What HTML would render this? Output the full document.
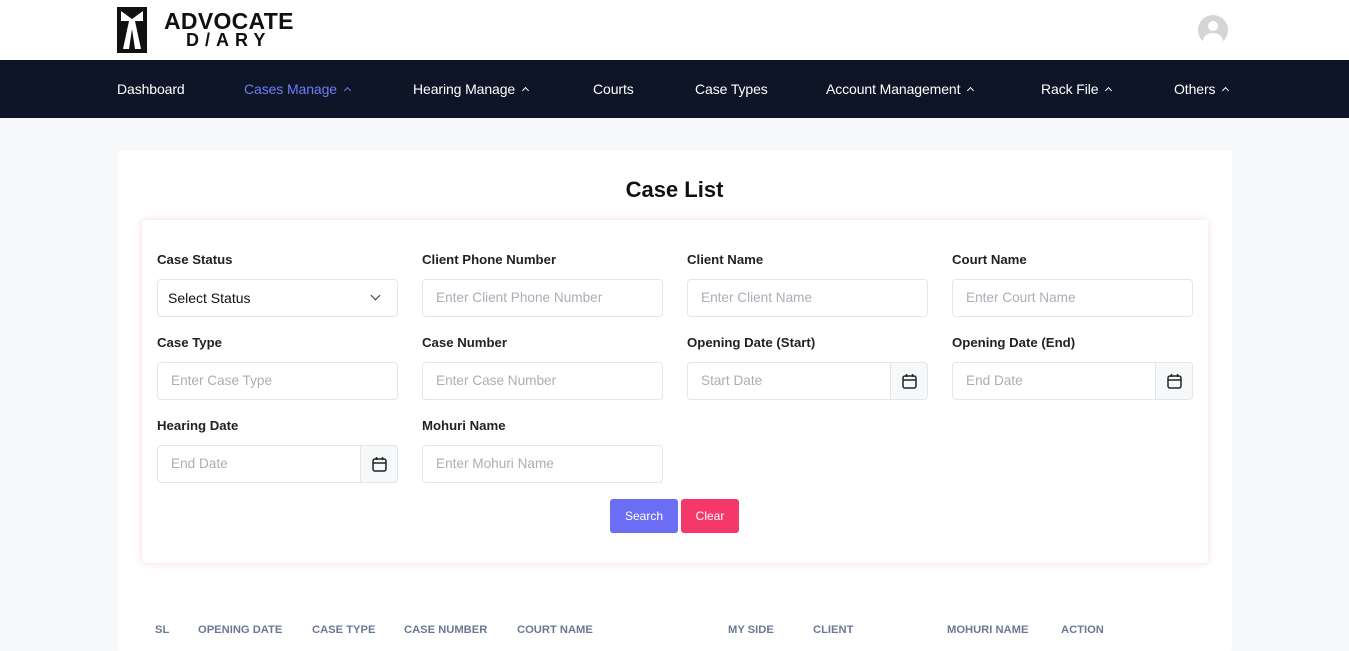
<!DOCTYPE html>
<html><head><style>
*{box-sizing:border-box;margin:0;padding:0}
body{width:1349px;height:643px;overflow:hidden;background:#f8f9fb;font-family:"Liberation Sans",Arial,sans-serif;position:relative}
.top{position:absolute;left:0;top:0;width:1349px;height:60px;background:#fff}
.nav{position:absolute;left:0;top:60px;width:1349px;height:58px;background:#0d1526}
.nav span{position:absolute;top:21px;color:#fff;font-size:14px;letter-spacing:-0.1px}
.nav span.a{color:#6f7cf5}
.car{display:inline-block;width:5px;height:5px;border-left:1.3px solid currentColor;border-top:1.3px solid currentColor;transform:rotate(45deg);margin-left:8px;position:relative;top:-1px}
.card{position:absolute;left:118px;top:151px;width:1114px;height:500px;background:#fff;border-radius:3px}
h1{position:absolute;top:177px;left:0;width:1349px;text-align:center;font-size:22px;font-weight:bold;color:#111}
.panel{position:absolute;left:142px;top:220px;width:1066px;height:343px;background:#fff;border-radius:4px;box-shadow:0 0 8px rgba(220,130,130,.3)}
.lbl{position:absolute;font-size:13.2px;font-weight:bold;color:#222}
.in{position:absolute;width:241px;height:38px;border:1px solid #e3e6ea;border-radius:4px;font-size:13.6px;color:#a9afb7;padding:10px 13px;background:#fff}
.in.s{color:#111;padding-left:10px;font-size:14px}
.chev{position:absolute;right:18px;top:12px;width:7px;height:7px;border-right:1.4px solid #333;border-bottom:1.4px solid #333;transform:rotate(45deg)}
.cal{position:absolute;right:0;top:0;width:37px;height:36px;border-left:1px solid #e3e6ea;background:#f7f8fa;border-radius:0 4px 4px 0}
.cal svg{position:absolute;left:11px;top:10px}
.btn{position:absolute;top:499px;height:34px;color:#fff;font-size:12px;text-align:center;line-height:34px;border-radius:3px}
.th{position:absolute;top:624px;font-size:11.2px;color:#6b7895;font-weight:bold}
</style></head><body>
<div class="top">
<svg style="position:absolute;left:117px;top:7px" width="30" height="46" viewBox="0 0 30 46"><rect width="30" height="46" fill="#111"/><path d="M4 4 L15 12 L26 4 L26 14 L18 14 L24 42 L18 42 L15 22 L12 42 L6 42 L12 14 L4 14Z" fill="#fff"/></svg>
<div style="position:absolute;left:164px;top:10px;font-size:23px;font-weight:900;color:#111;letter-spacing:0.3px;line-height:22px">ADVOCATE</div>
<div style="position:absolute;left:186px;top:30px;font-size:18px;font-weight:900;color:#111;letter-spacing:6px;line-height:20px">D/ARY</div>
<div style="position:absolute;left:1198px;top:15px;width:30px;height:30px;border-radius:50%;background:#d5d5d5;overflow:hidden"><div style="position:absolute;left:10px;top:6px;width:10px;height:10px;border-radius:50%;background:#fff"></div><div style="position:absolute;left:5px;top:18px;width:20px;height:16px;border-radius:50%;background:#fff"></div></div>
</div>
<div class="nav">
<span style="left:117px">Dashboard</span>
<span class="a" style="left:244px">Cases Manage<i class="car"></i></span>
<span style="left:413px">Hearing Manage<i class="car"></i></span>
<span style="left:593px">Courts</span>
<span style="left:695px">Case Types</span>
<span style="left:826px">Account Management<i class="car"></i></span>
<span style="left:1041px">Rack File<i class="car"></i></span>
<span style="left:1174px">Others<i class="car"></i></span>
</div>
<div class="card"></div>
<h1>Case List</h1>
<div class="panel"></div>
<div class="lbl" style="left:157px;top:252px">Case Status</div>
<div class="lbl" style="left:422px;top:252px">Client Phone Number</div>
<div class="lbl" style="left:687px;top:252px">Client Name</div>
<div class="lbl" style="left:952px;top:252px">Court Name</div>
<div class="in s" style="left:157px;top:279px">Select Status<i class="chev"></i></div>
<div class="in" style="left:422px;top:279px">Enter Client Phone Number</div>
<div class="in" style="left:687px;top:279px">Enter Client Name</div>
<div class="in" style="left:952px;top:279px">Enter Court Name</div>
<div class="lbl" style="left:157px;top:335px">Case Type</div>
<div class="lbl" style="left:422px;top:335px">Case Number</div>
<div class="lbl" style="left:687px;top:335px">Opening Date (Start)</div>
<div class="lbl" style="left:952px;top:335px">Opening Date (End)</div>
<div class="in" style="left:157px;top:362px">Enter Case Type</div>
<div class="in" style="left:422px;top:362px">Enter Case Number</div>
<div class="in" style="left:687px;top:362px">Start Date<div class="cal"><svg width="15" height="16" viewBox="0 0 15 16"><rect x="1" y="3" width="13" height="12" rx="2" fill="none" stroke="#222" stroke-width="1.5"/><path d="M1 7H14M4.5 1v3M10.5 1v3" stroke="#222" stroke-width="1.5"/></svg></div></div>
<div class="in" style="left:952px;top:362px">End Date<div class="cal"><svg width="15" height="16" viewBox="0 0 15 16"><rect x="1" y="3" width="13" height="12" rx="2" fill="none" stroke="#222" stroke-width="1.5"/><path d="M1 7H14M4.5 1v3M10.5 1v3" stroke="#222" stroke-width="1.5"/></svg></div></div>
<div class="lbl" style="left:157px;top:418px">Hearing Date</div>
<div class="lbl" style="left:422px;top:418px">Mohuri Name</div>
<div class="in" style="left:157px;top:445px">End Date<div class="cal"><svg width="15" height="16" viewBox="0 0 15 16"><rect x="1" y="3" width="13" height="12" rx="2" fill="none" stroke="#222" stroke-width="1.5"/><path d="M1 7H14M4.5 1v3M10.5 1v3" stroke="#222" stroke-width="1.5"/></svg></div></div>
<div class="in" style="left:422px;top:445px">Enter Mohuri Name</div>
<div class="btn" style="left:610px;width:68px;background:#6b6ef5">Search</div>
<div class="btn" style="left:681px;width:58px;background:#f5386a">Clear</div>
<div class="th" style="left:155px">SL</div>
<div class="th" style="left:198px">OPENING DATE</div>
<div class="th" style="left:312px">CASE TYPE</div>
<div class="th" style="left:404px">CASE NUMBER</div>
<div class="th" style="left:517px">COURT NAME</div>
<div class="th" style="left:728px">MY SIDE</div>
<div class="th" style="left:813px">CLIENT</div>
<div class="th" style="left:947px">MOHURI NAME</div>
<div class="th" style="left:1061px">ACTION</div>
</body></html>
